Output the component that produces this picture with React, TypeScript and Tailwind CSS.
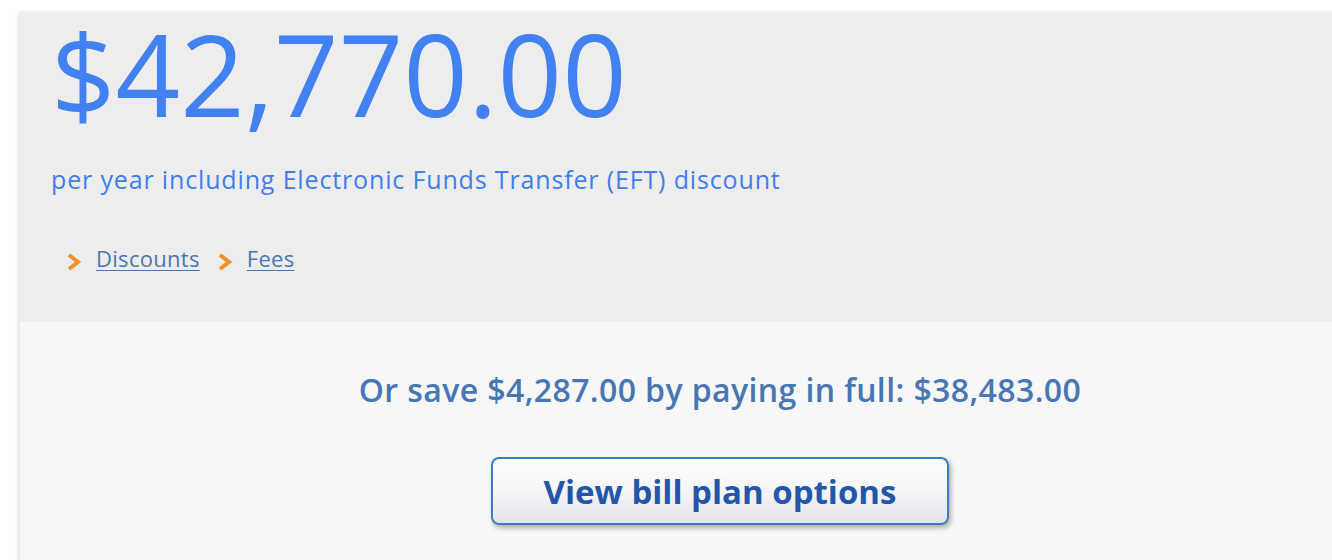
import React from "react";

function Chevron() {
  return (
    <svg width="16" height="20" viewBox="0 0 16 20" className="shrink-0 mt-[8px]">
      <path d="M3 3 L12 10 L3 17" fill="none" stroke="#f0922b" strokeWidth="4" strokeLinejoin="miter" />
    </svg>
  );
}

export default function App() {
  return (
    <div className="h-[560px] w-[1332px] overflow-hidden bg-white pt-[12px] pl-[20px]" style={{ fontFamily: '"Open Sans", "Noto Sans", sans-serif' }}>
      <div className="w-[1400px] h-[600px] shadow-[-2px_0_4px_rgba(0,0,0,0.12)]">
        <div className="h-[310px] bg-[#ededed] pl-[31px] flex flex-col items-start">
          <div className="-mt-[6px] text-[113px] leading-[1.2] text-[#4281f1]">$42,770.00</div>
          <div className="mt-[22px] text-[25px] leading-[30px] tracking-[0.85px] text-[#3f7eef]">per year including Electronic Funds Transfer (EFT) discount</div>
          <div className="mt-[50px] flex items-start pl-[15px] text-[22px] leading-[28px] tracking-[0.3px]">
            <Chevron />
            <a className="ml-[14px] text-[#4777b6] underline underline-offset-[3px] decoration-1">Discounts</a>
            <span className="ml-[17px]"><Chevron /></span>
            <a className="ml-[14px] text-[#4777b6] underline underline-offset-[3px] decoration-1">Fees</a>
          </div>
        </div>
        <div className="bg-[#f7f7f7] h-[290px] flex flex-col items-center">
          <div className="mt-[48px] text-[32px] leading-[40px] tracking-[0.4px] font-semibold text-[#4676b3]">Or save $4,287.00 by paying in full: $38,483.00</div>
          <button className="mt-[47px] w-[458px] h-[68px] rounded-[8px] border-2 border-[#3b7dc4] bg-gradient-to-b from-white via-[#f5f5f8] to-[#e4e4ea] shadow-[2px_3px_5px_rgba(0,0,0,0.3)] text-[33px] font-bold text-[#2356aa] leading-none">
            View bill plan options
          </button>
        </div>
      </div>
    </div>
  );
}
